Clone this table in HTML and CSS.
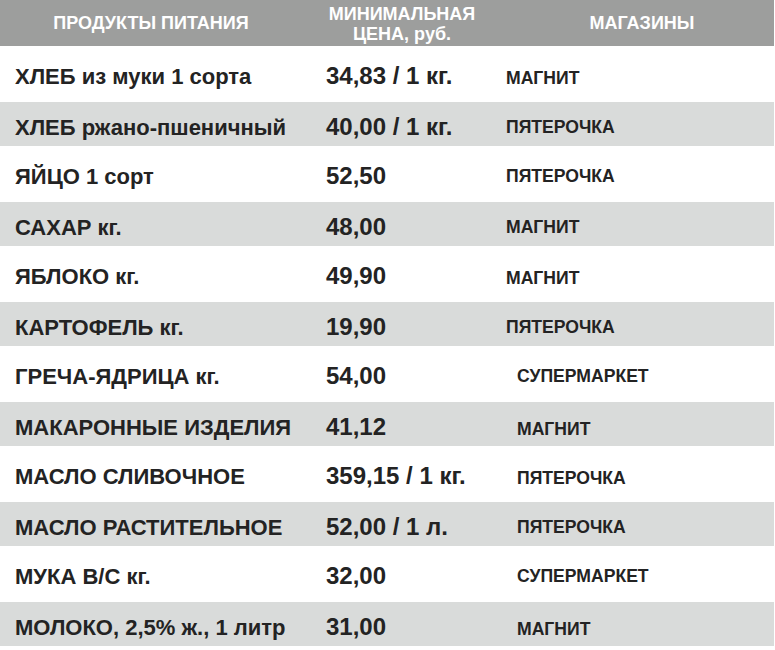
FILE: index.html
```html
<!DOCTYPE html>
<html lang="ru">
<head>
<meta charset="utf-8">
<title>Цены</title>
<link rel="stylesheet" href="styles.css">
</head>
<body>
<div class="table">
  <div class="head">
    <div class="hcell">ПРОДУКТЫ ПИТАНИЯ</div>
    <div class="hcell hprice">МИНИМАЛЬНАЯ<br>ЦЕНА, руб.</div>
    <div class="hcell hshop">МАГАЗИНЫ</div>
  </div>
  <div class="row light"><div class="name">ХЛЕБ из муки 1 сорта</div><div class="price">34,83 / 1 кг.</div><div class="shop even">МАГНИТ</div></div>
  <div class="row dark"><div class="name">ХЛЕБ ржано-пшеничный</div><div class="price">40,00 / 1 кг.</div><div class="shop">ПЯТЕРОЧКА</div></div>
  <div class="row light"><div class="name">ЯЙЦО 1 сорт</div><div class="price">52,50</div><div class="shop">ПЯТЕРОЧКА</div></div>
  <div class="row dark"><div class="name">САХАР кг.</div><div class="price">48,00</div><div class="shop">МАГНИТ</div></div>
  <div class="row light"><div class="name">ЯБЛОКО кг.</div><div class="price">49,90</div><div class="shop even">МАГНИТ</div></div>
  <div class="row dark"><div class="name">КАРТОФЕЛЬ кг.</div><div class="price">19,90</div><div class="shop">ПЯТЕРОЧКА</div></div>
  <div class="row light"><div class="name">ГРЕЧА-ЯДРИЦА кг.</div><div class="price">54,00</div><div class="shop shift">СУПЕРМАРКЕТ</div></div>
  <div class="row dark"><div class="name">МАКАРОННЫЕ ИЗДЕЛИЯ</div><div class="price">41,12</div><div class="shop shift even">МАГНИТ</div></div>
  <div class="row light"><div class="name">МАСЛО СЛИВОЧНОЕ</div><div class="price">359,15 / 1 кг.</div><div class="shop shift even">ПЯТЕРОЧКА</div></div>
  <div class="row dark"><div class="name">МАСЛО РАСТИТЕЛЬНОЕ</div><div class="price">52,00 / 1 л.</div><div class="shop shift">ПЯТЕРОЧКА</div></div>
  <div class="row light"><div class="name">МУКА В/С кг.</div><div class="price">32,00</div><div class="shop shift">СУПЕРМАРКЕТ</div></div>
  <div class="row dark"><div class="name">МОЛОКО, 2,5% ж., 1 литр</div><div class="price">31,00</div><div class="shop shift even">МАГНИТ</div></div>
</div>
</body>
</html>
```
FILE: styles.css
```css
html, body {
  margin: 0;
  padding: 0;
  background: #ffffff;
}
body {
  font-family: "Liberation Sans", Arial, sans-serif;
  font-weight: bold;
  color: #232323;
}
.table {
  width: 774px;
}
.head {
  display: grid;
  grid-template-columns: 302px 200px 272px;
  height: 46px;
  background: #9d9e9d;
  color: #ffffff;
  font-size: 18px;
  align-items: center;
}
.hcell {
  text-align: center;
}
.hprice {
  line-height: 20px;
  padding-top: 1px;
}
.hshop {
  padding-left: 8px;
}
.row {
  display: grid;
  grid-template-columns: 302px 200px 272px;
  align-items: start;
  line-height: 1.15;
}
.row.light {
  height: 56px;
  background: #ffffff;
}
.row.dark {
  height: 44px;
  background: #d9dbda;
}
.name {
  padding-left: 15px;
  font-size: 22px;
}
.price {
  padding-left: 24px;
  font-size: 24px;
}
.shop {
  padding-left: 4px;
  font-size: 17.6px;
}
.shop.shift {
  padding-left: 15px;
}
.row.light .name { padding-top: 18px; }
.row.light .price { padding-top: 16px; }
.row.light .shop { padding-top: 20px; }
.row.light .shop.even { padding-top: 22px; }
.row.dark .name { padding-top: 13px; }
.row.dark .price { padding-top: 11px; }
.row.dark .shop { padding-top: 15px; }
.row.dark .shop.even { padding-top: 17px; }
```
